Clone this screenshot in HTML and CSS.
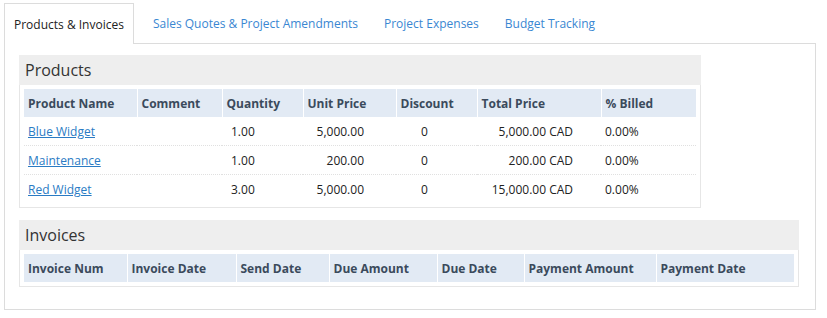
FILE: index.html
```html
<!DOCTYPE html>
<html lang="en">
<head>
    <meta charset="UTF-8">
    <meta name="viewport" content="width=device-width, initial-scale=1.0">
    <title>Project</title>
    <link rel="stylesheet" href="styles.css">
</head>
<body>
    <div class="page">
        <div class="tabs">
            <div class="tab active">Products &amp; Invoices</div>
            <div class="tab">Sales Quotes &amp; Project Amendments</div>
            <div class="tab">Project Expenses</div>
            <div class="tab">Budget Tracking</div>
        </div>
        <div class="panel">
            <div class="section">
                <div class="section-title">Products</div>
                <div class="section-body">
                    <table class="grid products">
                        <colgroup>
                            <col style="width:113px"><col style="width:85px"><col style="width:81px"><col style="width:93px"><col style="width:81px"><col style="width:124px"><col style="width:95px">
                        </colgroup>
                        <thead>
                            <tr>
                                <th>Product Name</th>
                                <th>Comment</th>
                                <th>Quantity</th>
                                <th>Unit Price</th>
                                <th>Discount</th>
                                <th>Total Price</th>
                                <th>% Billed</th>
                            </tr>
                        </thead>
                        <tbody>
                            <tr>
                                <td><a href="#">Blue Widget</a></td>
                                <td></td>
                                <td class="qty">1.00</td>
                                <td class="price">5,000.00</td>
                                <td class="disc">0</td>
                                <td class="total">5,000.00 CAD</td>
                                <td>0.00%</td>
                            </tr>
                            <tr>
                                <td><a href="#">Maintenance</a></td>
                                <td></td>
                                <td class="qty">1.00</td>
                                <td class="price">200.00</td>
                                <td class="disc">0</td>
                                <td class="total">200.00 CAD</td>
                                <td>0.00%</td>
                            </tr>
                            <tr>
                                <td><a href="#">Red Widget</a></td>
                                <td></td>
                                <td class="qty">3.00</td>
                                <td class="price">5,000.00</td>
                                <td class="disc">0</td>
                                <td class="total">15,000.00 CAD</td>
                                <td>0.00%</td>
                            </tr>
                        </tbody>
                    </table>
                </div>
            </div>
            <div class="section">
                <div class="section-title">Invoices</div>
                <div class="section-body">
                    <table class="grid invoices">
                        <colgroup>
                            <col style="width:103px"><col style="width:109px"><col style="width:93px"><col style="width:108px"><col style="width:87px"><col style="width:132px"><col style="width:138px">
                        </colgroup>
                        <thead>
                            <tr>
                                <th>Invoice Num</th>
                                <th>Invoice Date</th>
                                <th>Send Date</th>
                                <th>Due Amount</th>
                                <th>Due Date</th>
                                <th>Payment Amount</th>
                                <th>Payment Date</th>
                            </tr>
                        </thead>
                    </table>
                </div>
            </div>
        </div>
    </div>
</body>
</html>
```

FILE: styles.css
```css
html, body {
    margin: 0;
    padding: 0;
    background: #fff;
    font-family: "Open Sans", "Noto Sans", sans-serif;
    font-size: 12px;
    color: #222;
}
.page {
    padding: 2px 11px 0 4px;
}
.tabs {
    display: flex;
    height: 41px;
    align-items: stretch;
}
.tab {
    display: flex;
    align-items: center;
    padding: 0 12px;
    color: #3a87d2;
    border: 1px solid transparent;
    border-bottom: none;
}
.tab.active {
    color: #222;
    padding: 0 9px;
    margin-right: 6px;
    border-color: #dcdcdc;
    background: #fff;
    position: relative;
    top: 1px;
}
.panel {
    border: 1px solid #dcdcdc;
    padding: 11px 14px 22px 14px;
}
.section {
    display: table;
    margin-bottom: 12px;
}
.section:last-child {
    margin-bottom: 0;
}
.section-title {
    background: #eeeeee;
    height: 30px;
    line-height: 30px;
    padding: 0 6px;
    font-size: 16px;
    color: #333;
}
.section-body {
    border: 1px solid #e6e6e6;
    border-top: none;
    padding: 4px;
}
.grid {
    border-collapse: collapse;
    table-layout: fixed;
}
.grid th {
    background: #e2eaf4;
    color: #3b4a5c;
    font-weight: bold;
    text-align: left;
    height: 28px;
    padding: 0 4px;
    border-left: 1px solid #fff;
}
.grid th:first-child {
    border-left: none;
}
.grid td {
    height: 28px;
    padding: 0 4px;
    border-bottom: 1px dotted #e0e0e0;
    white-space: nowrap;
}
.grid tbody tr:last-child td {
    border-bottom: none;
}
.grid a {
    color: #2a7bc4;
}
.grid td.qty {
    padding-left: 9px;
}
.grid td.price {
    text-align: right;
    padding-right: 32px;
}
.grid td.disc {
    padding-left: 25px;
}
.grid td.total {
    text-align: right;
    padding-right: 28px;
}
```
